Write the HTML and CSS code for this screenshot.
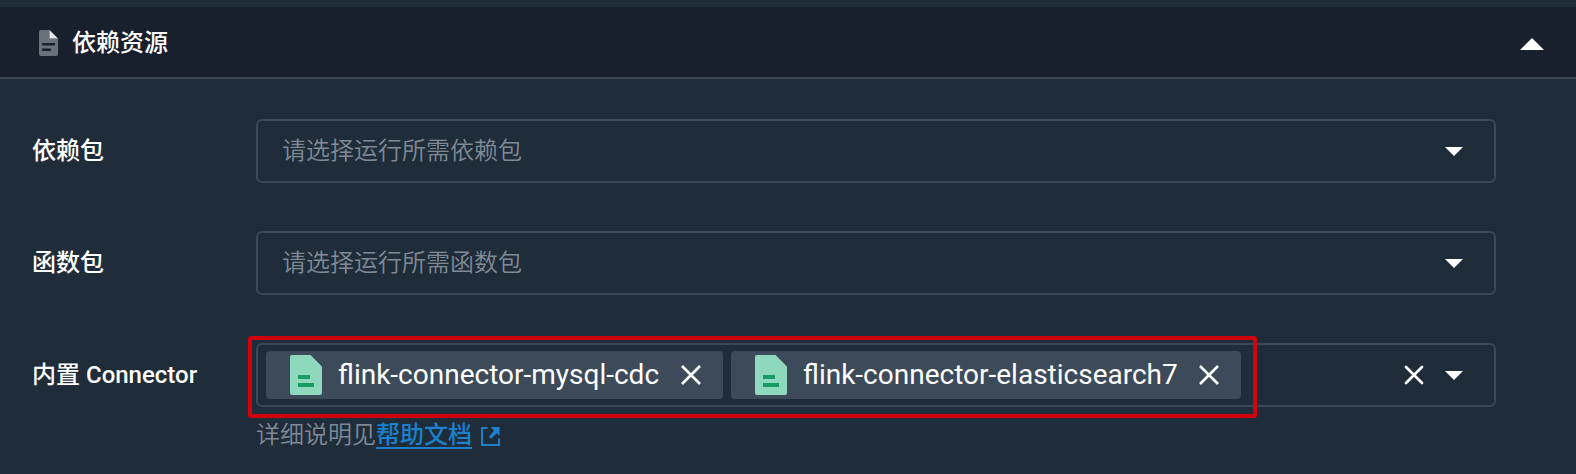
FILE: index.html
```html
<!DOCTYPE html>
<html lang="zh-CN">
<head>
<meta charset="utf-8">
<title>依赖资源</title>
<link rel="stylesheet" href="styles.css">
</head>
<body>
<section class="panel">
  <header class="panel-header">
    <svg class="header-icon" width="20" height="28" viewBox="0 0 20 28"><path fill="#69727b" d="M2 1H10.500V9.500H19V25Q19 27 17 27H2Q0 27 0 25V3Q0 1 2 1Z"/><path fill="#e3e5e8" d="M10.500 1L19 9.500H10.500Z"/><path stroke="#17202c" stroke-width="2.400" stroke-linecap="round" d="M4 15.300H15M4 20.800H11"/></svg>
    <h2 class="panel-title">依赖资源</h2>
    <svg class="collapse" width="24" height="12" viewBox="0 0 24 12"><path fill="#fff" d="M0 12L12 0L24 12Z"/></svg>
  </header>
  <div class="form">
    <div class="row">
      <label class="label">依赖包</label>
      <div class="select"><span class="placeholder">请选择运行所需依赖包</span><svg class="caret" width="18" height="9" viewBox="0 0 18 9"><path fill="#fff" d="M0 0H18L9 9Z"/></svg></div>
    </div>
    <div class="row">
      <label class="label">函数包</label>
      <div class="select"><span class="placeholder">请选择运行所需函数包</span><svg class="caret" width="18" height="9" viewBox="0 0 18 9"><path fill="#fff" d="M0 0H18L9 9Z"/></svg></div>
    </div>
    <div class="row">
      <label class="label">内置 Connector</label>
      <div class="select select-tags">
        <div class="tag tag-mysql">
          <svg class="tag-icon" width="32" height="40" viewBox="0 0 32 40"><path fill="#8ed9bd" d="M2 0H20.500L32 11.500V38Q32 40 30 40H2Q0 40 0 38V2Q0 0 2 0Z"/><path fill="#1a9b62" d="M8 20H20V24H8ZM8 28H24V32H8Z"/></svg>
          <span class="tag-text">flink-connector-mysql-cdc</span>
          <svg class="close" width="20" height="20" viewBox="0 0 20 20"><path stroke="#fff" stroke-width="2.600" d="M1 1L19 19M19 1L1 19"/></svg>
        </div>
        <div class="tag tag-es">
          <svg class="tag-icon" width="32" height="40" viewBox="0 0 32 40"><path fill="#8ed9bd" d="M2 0H20.500L32 11.500V38Q32 40 30 40H2Q0 40 0 38V2Q0 0 2 0Z"/><path fill="#1a9b62" d="M8 20H20V24H8ZM8 28H24V32H8Z"/></svg>
          <span class="tag-text">flink-connector-elasticsearch7</span>
          <svg class="close" width="20" height="20" viewBox="0 0 20 20"><path stroke="#fff" stroke-width="2.600" d="M1 1L19 19M19 1L1 19"/></svg>
        </div>
        <svg class="clear" width="20" height="20" viewBox="0 0 20 20"><path stroke="#fff" stroke-width="2.700" stroke-linecap="round" d="M2 2L18 18M18 2L2 18"/></svg>
        <svg class="caret" width="18" height="9" viewBox="0 0 18 9"><path fill="#fff" d="M0 0H18L9 9Z"/></svg>
        <div class="highlight"></div>
      </div>
    </div>
    <p class="hint"><span>详细说明见</span><a class="link">帮助文档</a><svg class="external" width="20" height="20" viewBox="0 0 20 20"><path fill="none" stroke="#1b80cd" stroke-width="2" d="M7.500 2H2V19H19V12.500"/><path fill="#1b80cd" d="M10.500 1H19.500V10L16.800 7.300L11 12.700L9 10.700L14 4.500Z"/></svg></p>
  </div>
</section>
</body>
</html>
```
FILE: styles.css
```css
* { box-sizing: border-box; }
body {
  margin: 0;
  height: 474px;
  overflow: hidden;
  background: #1f2c39;
  color: #fff;
  font: 24px/36px Roboto, "Noto Sans CJK SC", sans-serif;
}
svg { display: block; flex: none; }
.panel { padding-top: 7px; }
.panel-header {
  display: flex;
  align-items: center;
  height: 72px;
  padding: 0 32px 0 39px;
  background: #17202c;
  border-bottom: 2px solid #3c4858;
}
.header-icon { margin-top: 2px; }
.panel-title { margin: 2px 0 0 13px; font-size: 24px; font-weight: 500; }
.collapse { margin: 4px 0 0 auto; }
.form { padding: 40px 80px 0 32px; }
.row { display: flex; align-items: center; height: 64px; margin-bottom: 48px; }
.label { width: 224px; font-weight: 500; white-space: nowrap; }
.select {
  position: relative;
  display: flex;
  align-items: center;
  flex: 1;
  height: 64px;
  padding: 0 31px 0 24px;
  border: 2px solid #3c4858;
  border-radius: 6px;
}
.placeholder { color: #7f8a96; font-weight: 350; }
.caret { margin-left: auto; }
.select-tags { padding-left: 8px; }
.tag {
  display: flex;
  align-items: center;
  height: 48px;
  margin-right: 8px;
  padding: 0 22px 0 24px;
  background: #3c4a5a;
  border-radius: 4px;
}
.tag-mysql { width: 457px; }
.tag-es { width: 510px; }
.tag-text { margin-left: 16px; font-size: 28px; white-space: nowrap; }
.close { margin-left: auto; }
.clear { margin-left: auto; }
.clear + .caret { margin-left: 21px; }
.highlight {
  position: absolute;
  left: -10px;
  top: -9px;
  width: 1009px;
  height: 82px;
  border: 4px solid #d0020e;
  border-radius: 3px;
}
.hint {
  display: flex;
  align-items: center;
  margin: -38px 0 0 224px;
  color: #7f8a96;
  font-weight: 350;
}
.link {
  color: #1b80cd;
  font-weight: 500;
  text-decoration: underline;
  text-decoration-thickness: 2px;
  text-underline-offset: 4px;
}
.external { margin: 2px 0 0 8px; }
```
